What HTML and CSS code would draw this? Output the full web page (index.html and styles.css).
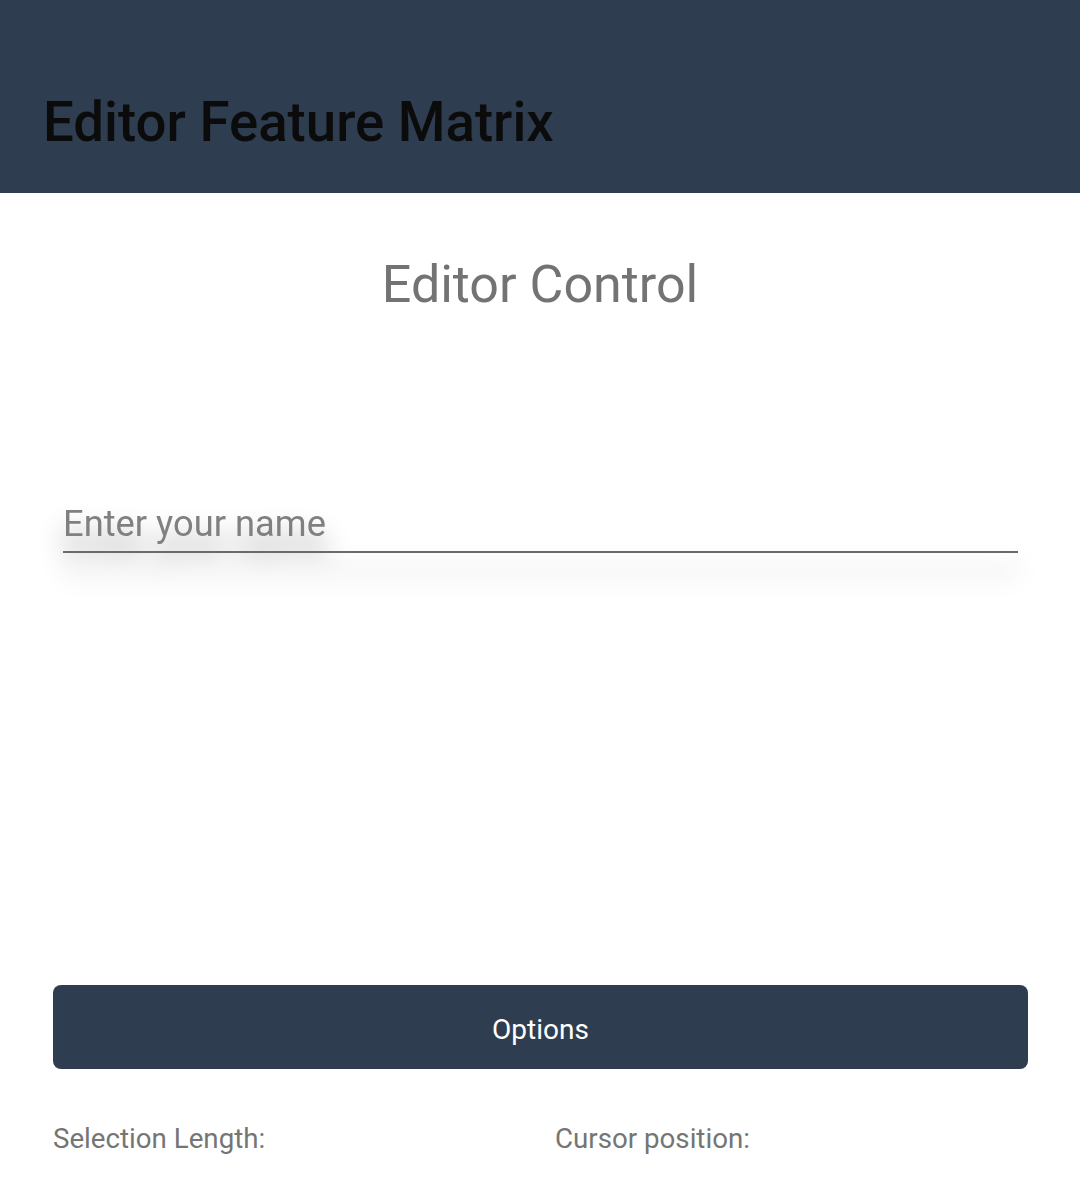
FILE: index.html
```html
<!DOCTYPE html>
<html>
<head>
<meta charset="utf-8">
<link rel="stylesheet" href="styles.css">
</head>
<body>
<header class="appbar">
  <h1 class="appbar-title">Editor Feature Matrix</h1>
</header>
<main class="content">
  <h2 class="section-title">Editor Control</h2>
  <div class="field">
    <input class="name-input" type="text" placeholder="Enter your name">
  </div>
  <button class="options-btn" type="button">Options</button>
  <div class="stats">
    <span class="stat">Selection Length:</span>
    <span class="stat">Cursor position:</span>
  </div>
</main>
</body>
</html>
```

FILE: styles.css
```css
html, body {
  margin: 0;
  padding: 0;
  background: #ffffff;
  font-family: Roboto, "Noto Sans", "Liberation Sans", sans-serif;
}

.appbar {
  height: 193px;
  background: #2e3e50;
  display: flex;
  align-items: flex-start;
  box-sizing: border-box;
  padding: 90px 0 0 43px;
}

.appbar-title {
  margin: 0;
  font-size: 54.6px;
  line-height: 64px;
  font-weight: 500;
  color: #0b0b0c;
  letter-spacing: 0;
}

.content {
  display: flex;
  flex-direction: column;
}

.section-title {
  margin: 61px 0 0 0;
  text-align: center;
  font-size: 52px;
  line-height: 62px;
  font-weight: 400;
  color: #737373;
}

.field {
  margin: 185px 62px 0 63px;
  filter: drop-shadow(0 18px 13px rgba(0, 0, 0, 0.4));
}

.name-input {
  display: block;
  width: 100%;
  box-sizing: border-box;
  height: 52px;
  margin: 0;
  padding: 0 0 6px 0;
  border: none;
  border-bottom: 2px solid #6a6a6a;
  background: transparent;
  outline: none;
  font-family: Roboto, "Noto Sans", sans-serif;
  font-size: 36.3px;
  line-height: 44px;
  color: #333;
}

.name-input::placeholder {
  color: #808080;
  opacity: 1;
}

.options-btn {
  margin: 432px 52px 0 53px;
  height: 84px;
  box-sizing: border-box;
  border: none;
  border-radius: 8px;
  background: #2e3e50;
  color: #ffffff;
  font-family: Roboto, "Noto Sans", sans-serif;
  font-size: 28px;
  line-height: 79px;
  padding: 5px 0 0 0;
}

.stats {
  margin: 53px 23px 0 53px;
  display: grid;
  grid-template-columns: 1fr 1fr;
}

.stat {
  font-size: 27.7px;
  line-height: 33px;
  color: #757575;
}
```
